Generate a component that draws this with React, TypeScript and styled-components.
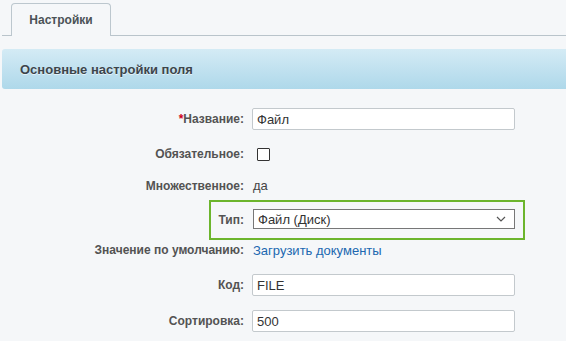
import styled, { createGlobalStyle } from "styled-components";

const GlobalStyle = createGlobalStyle`
  html, body {
    margin: 0;
    padding: 0;
    background: #f5f7f9;
    overflow: hidden;
  }
  body {
    font-family: "Liberation Sans", Arial, sans-serif;
  }
`;

type FieldRow = {
  label: string;
  required?: boolean;
  height: number;
  kind: "input" | "checkbox" | "text" | "select" | "link";
  value?: string;
  highlight?: boolean;
};

const rows: Array<FieldRow> = [
  { label: "Название:", required: true, height: 36, kind: "input", value: "Файл" },
  { label: "Обязательное:", height: 34, kind: "checkbox" },
  { label: "Множественное:", height: 29, kind: "text", value: "да" },
  { label: "Тип:", height: 40, kind: "select", value: "Файл (Диск)", highlight: true },
  { label: "Значение по умолчанию:", height: 20, kind: "link", value: "Загрузить документы" },
  { label: "Код:", height: 50, kind: "input", value: "FILE" },
  { label: "Сортировка:", height: 22, kind: "input", value: "500" },
];

function Chevron() {
  return (
    <svg width="10" height="6" viewBox="0 0 10 6">
      <path d="M1 1 L5 5 L9 1" fill="none" stroke="#555" strokeWidth="1.2" />
    </svg>
  );
}

function Control({ row }: { row: FieldRow }) {
  switch (row.kind) {
    case "input":
      return <TextInput defaultValue={row.value} />;
    case "checkbox":
      return <Checkbox />;
    case "text":
      return <PlainValue>{row.value}</PlainValue>;
    case "select":
      return (
        <SelectBox>
          <span>{row.value}</span>
          <Chevron />
        </SelectBox>
      );
    case "link":
      return <Link href="#">{row.value}</Link>;
  }
}

export default function App() {
  return (
    <>
      <GlobalStyle />
      <Page>
        <TabBar>
          <Tab>Настройки</Tab>
        </TabBar>

        <SectionHeader>Основные настройки поля</SectionHeader>

        <Form>
          {rows.map((row) => (
            <Row key={row.label} $height={row.height} $highlight={row.highlight}>
              <Label>
                {row.required && <Star>*</Star>}
                {row.label}
              </Label>
              <Control row={row} />
            </Row>
          ))}
        </Form>
      </Page>
    </>
  );
}

// Style
const Page = styled.div`
  width: 566px;
  height: 341px;
  padding-left: 2px;
  box-sizing: border-box;
`;

const TabBar = styled.div`
  height: 36px;
  padding: 4px 0 0 9px;
  box-sizing: border-box;
  border-bottom: 1px solid #b9c4cb;
  display: flex;
  align-items: flex-end;
`;

const Tab = styled.div`
  width: 100px;
  height: 33px;
  box-sizing: border-box;
  margin-bottom: -1px;
  border: 1px solid #bcc7ce;
  border-bottom: none;
  border-radius: 4px 4px 0 0;
  background: #f5f7f9;
  display: flex;
  align-items: center;
  justify-content: center;
  padding-bottom: 1px;
  font-size: 12px;
  font-weight: bold;
  color: #4b5257;
`;

const SectionHeader = styled.div`
  margin-top: 13px;
  margin-right: -8px;
  height: 40px;
  border-radius: 3px;
  background: linear-gradient(to bottom, #d4ebf5, #aed8ea);
  padding-left: 18px;
  display: flex;
  align-items: center;
  font-size: 13px;
  font-weight: bold;
  color: #3c454b;
  text-shadow: 0 1px 0 rgba(255, 255, 255, 0.6);
`;

const Form = styled.div`
  padding-top: 12px;
  display: flex;
  flex-direction: column;
`;

const Row = styled.div<{ $height: number; $highlight?: boolean }>`
  position: relative;
  height: ${(p) => p.$height}px;
  display: flex;
  align-items: center;

  ${(p) =>
    p.$highlight &&
    `
    &::before {
      content: "";
      position: absolute;
      left: 207px;
      top: 0;
      width: 316px;
      height: 40px;
      box-sizing: border-box;
      border: 2px solid #6cb52d;
      pointer-events: none;
    }
  `}
`;

const Label = styled.div`
  width: 250px;
  padding-right: 8px;
  box-sizing: border-box;
  text-align: right;
  font-size: 12px;
  font-weight: bold;
  color: #535353;
  white-space: nowrap;
`;

const Star = styled.span`
  color: #d0021b;
`;

const TextInput = styled.input`
  width: 263px;
  height: 22px;
  box-sizing: border-box;
  border: 1px solid #c3c9cd;
  border-radius: 2px;
  background: #fff;
  padding: 0 4px;
  font-family: "Liberation Sans", Arial, sans-serif;
  font-size: 13px;
  color: #333;
  outline: none;
`;

const Checkbox = styled.span`
  display: block;
  margin-left: 5px;
  width: 13px;
  height: 13px;
  box-sizing: border-box;
  border: 1px solid #333;
  border-radius: 1px;
  background: #fff;
`;

const PlainValue = styled.span`
  font-size: 13px;
  color: #444;
  padding-left: 1px;
`;

const SelectBox = styled.div`
  width: 262px;
  height: 20px;
  margin-left: 1px;
  margin-top: -2px;
  box-sizing: border-box;
  border: 1px solid #777;
  background: #fff;
  padding: 0 8px 0 4px;
  display: flex;
  align-items: center;
  justify-content: space-between;
  font-size: 13px;
  color: #333;
`;

const Link = styled.a`
  font-size: 13px;
  color: #2067b0;
  text-decoration: none;
  padding-left: 1px;
`;
